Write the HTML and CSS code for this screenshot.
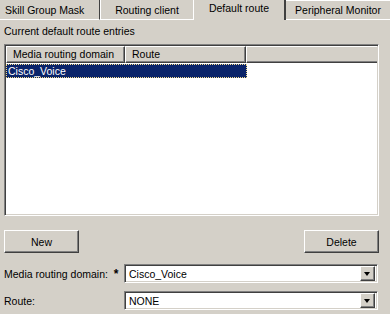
FILE: index.html
```html
<!DOCTYPE html>
<html lang="en">
<head>
    <meta charset="UTF-8">
    <title>Default route</title>
    <link rel="stylesheet" href="styles.css">
</head>
<body>
    <div class="tabs">
        <div class="tab tab-1">Skill Group Mask</div>
        <div class="tab tab-2">Routing client</div>
        <div class="tab tab-active">Default route</div>
        <div class="tab tab-4">Peripheral Monitor</div>
    </div>

    <div class="page">
        <div class="caption">Current default route entries</div>

        <div class="listbox">
            <div class="list-header">
                <div class="col col-domain">Media routing domain</div>
                <div class="col col-route">Route</div>
                <div class="col col-fill"></div>
            </div>
            <div class="list-row selected">
                <span>Cisco_Voice</span>
            </div>
        </div>

        <div class="buttons">
            <button class="btn">New</button>
            <button class="btn">Delete</button>
        </div>

        <div class="field">
            <label class="field-label">Media routing domain: <span class="req">*</span></label>
            <div class="combo">
                <span class="combo-value">Cisco_Voice</span>
                <span class="combo-arrow"></span>
            </div>
        </div>
        <div class="field">
            <label class="field-label">Route:</label>
            <div class="combo">
                <span class="combo-value">NONE</span>
                <span class="combo-arrow"></span>
            </div>
        </div>
    </div>
</body>
</html>
```

FILE: styles.css
```css
body, html {
    margin: 0;
    padding: 0;
    width: 390px;
    height: 314px;
    overflow: hidden;
    background-color: #d4d0c8;
    font-family: "Liberation Sans", Arial, sans-serif;
    font-size: 10.5px;
    color: #000;
}

/* tabs */
.tabs {
    display: flex;
    height: 20px;
}

.tab {
    box-sizing: border-box;
    height: 20px;
    padding-top: 4px;
    text-align: center;
    white-space: nowrap;
    border-bottom: 1px solid #fff;
}

.tab-1 {
    width: 100px;
    text-align: left;
    padding-left: 5px;
    border-right: 1px solid #404040;
}

.tab-2 {
    width: 93px;
    border-left: 1px solid #fff;
}

.tab-active {
    width: 93px;
    padding-top: 2px;
    border-left: 1px solid #fff;
    border-right: 2px solid #404040;
    border-bottom: none;
}

.tab-4 {
    flex: 1;
    border-top: 1px solid #fff;
    padding-top: 3px;
}

.page {
    padding: 0 11px 0 4px;
}

.caption {
    margin-top: 4px;
    height: 14px;
    line-height: 14px;
}

/* list */
.listbox {
    box-sizing: border-box;
    margin-top: 6px;
    width: 375px;
    height: 172px;
    background-color: #fff;
    border-top: 1px solid #808080;
    border-left: 1px solid #808080;
    border-right: 1px solid #fff;
    border-bottom: 1px solid #fff;
    box-shadow: inset 1px 1px 0 #404040, inset -1px -1px 0 #d4d0c8;
    padding: 1px;
}

.list-header {
    display: flex;
    height: 17px;
    background-color: #d4d0c8;
}

.col {
    box-sizing: border-box;
    height: 17px;
    line-height: 15px;
    padding-left: 6px;
    white-space: nowrap;
    border-top: 1px solid #fff;
    border-left: 1px solid #fff;
    border-right: 1px solid #404040;
    border-bottom: 1px solid #404040;
    box-shadow: inset -1px -1px 0 #808080;
}

.col-domain {
    width: 119px;
}

.col-route {
    width: 121px;
}

.col-fill {
    flex: 1;
    border-right: none;
    box-shadow: inset 0 -1px 0 #808080;
}

.list-row {
    width: 241px;
    height: 14px;
    line-height: 12px;
    margin-top: 1px;
    box-sizing: border-box;
}

.list-row.selected {
    background-color: #0a246a;
    color: #fff;
    border: 1px dotted #f4dc8c;
    padding-left: 1px;
}

/* buttons */
.buttons {
    display: flex;
    justify-content: space-between;
    margin-top: 14px;
}

.btn {
    box-sizing: border-box;
    width: 75px;
    height: 23px;
    font-family: inherit;
    font-size: 10.5px;
    color: #000;
    background-color: #d4d0c8;
    border-top: 1px solid #fff;
    border-left: 1px solid #fff;
    border-right: 1px solid #404040;
    border-bottom: 1px solid #404040;
    box-shadow: inset -1px -1px 0 #808080;
    padding: 0;
}

/* fields */
.field {
    display: flex;
    align-items: center;
    height: 19px;
    margin-top: 11px;
}

.field + .field {
    margin-top: 8px;
}

.field-label {
    flex: none;
    width: 120px;
    white-space: nowrap;
}

.req {
    font-weight: bold;
    margin-left: 3px;
    font-size: 12px;
}

.combo {
    box-sizing: border-box;
    flex: none;
    display: flex;
    align-items: center;
    justify-content: space-between;
    width: 254px;
    height: 19px;
    background-color: #fff;
    border-top: 1px solid #808080;
    border-left: 1px solid #808080;
    border-right: 1px solid #fff;
    border-bottom: 1px solid #fff;
    box-shadow: inset 1px 1px 0 #404040, inset -1px -1px 0 #d4d0c8;
    padding: 2px;
}

.combo-value {
    padding-left: 2px;
}

.combo-arrow {
    box-sizing: border-box;
    position: relative;
    width: 15px;
    height: 15px;
    background-color: #d4d0c8;
    border-top: 1px solid #fff;
    border-left: 1px solid #fff;
    border-right: 1px solid #404040;
    border-bottom: 1px solid #404040;
    box-shadow: inset -1px -1px 0 #808080;
}

.combo-arrow::after {
    content: "";
    position: absolute;
    left: 3px;
    top: 5px;
    border-left: 3.5px solid transparent;
    border-right: 3.5px solid transparent;
    border-top: 4px solid #000;
}
```
